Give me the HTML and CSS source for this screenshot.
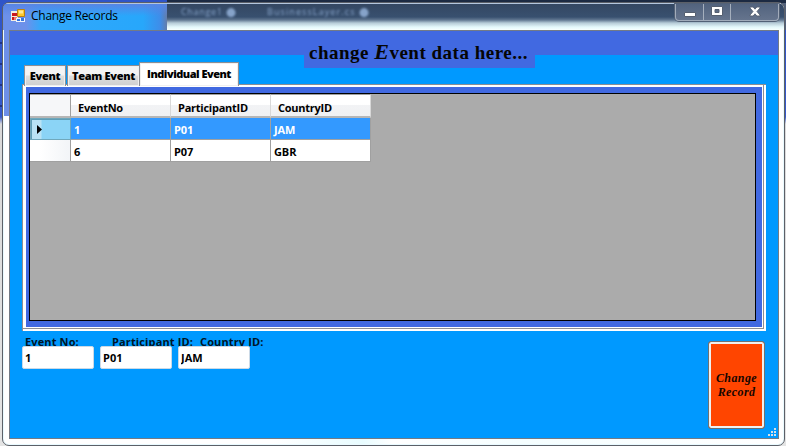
FILE: index.html
```html
<!DOCTYPE html>
<html lang="en">
<head>
<meta charset="utf-8">
<title>Change Records</title>
<link rel="stylesheet" href="styles.css">
</head>
<body>
<div class="desktop">
<div class="edge-text"></div>
<main class="window">
  <header class="titlebar">
    <div class="glass-blue"></div>
    <span class="ghost ghost-a">Change1 ⬤</span>
    <span class="ghost ghost-b">BusinessLayer.cs ⬤</span>
    <svg class="app-icon" width="15" height="14" viewBox="0 0 15 14">
      <path d="M0 2h7v10H0z" fill="#f4ede1"/><path d="M1 4h5v3H1zM1 8h2v3H1z" fill="#c9171e"/><path d="M3 8h3v3H3z" fill="#ed7c72"/>
      <path d="M6.500.5h7v7h-7z" fill="#ffc72b" stroke="#b98110"/><path d="M8 1.500h4v3H8z" fill="#ffe897"/>
      <path d="M5 9h9v4H5z" fill="#eef3fc"/><path d="M6 10h3v2H6zM10 9h3v3h-3z" fill="#3676df"/>
    </svg>
    <h1>Change Records</h1>
    <div class="controls">
      <button aria-label="Minimize"><svg width="12" height="5"><path d="M.5.5h11v4H.5z" fill="#fff" stroke="#555f70"/></svg></button>
      <button aria-label="Maximize"><svg width="12" height="10"><path d="M.5.5h11v9H.5zM4 3.500v3h4v-3z" fill="#fff" fill-rule="evenodd" stroke="#555f70"/></svg></button>
      <button aria-label="Close"><svg width="12" height="11" viewBox="0 0 12 11"><path d="M1 1h3.200L6 3.200 7.800 1H11v1L8 5.500 11 9v1H7.800L6 7.800 4.200 10H1V9l3-3.500L1 2z" fill="#fff" stroke="#555f70" stroke-width=".9"/></svg></button>
    </div>
  </header>
  <section class="client">
    <div class="banner"><h2>change <i>E</i>vent data here...</h2></div>
    <nav class="tabs">
      <span class="tab event"><b>Event</b></span><span class="tab team"><b>Team Event</b></span><span class="tab active"><b>Individual Event</b></span>
    </nav>
    <div class="panel"><div class="page"><div class="gridview">
      <table>
        <thead><tr><th class="rowhead"></th><th>EventNo</th><th>ParticipantID</th><th>CountryID</th></tr></thead>
        <tbody>
          <tr class="selected"><td class="rowhead"><svg width="5" height="9"><path d="M0 0l5 4.500L0 9z"/></svg></td><td>1</td><td>P01</td><td>JAM</td></tr>
          <tr><td class="rowhead"></td><td>6</td><td>P07</td><td>GBR</td></tr>
        </tbody>
      </table>
    </div></div></div>
    <div class="bottom">
      <div class="fields">
        <div class="labels"><span class="l1">Event No:</span><span class="l2">Participant ID:</span><span class="l3">Country ID:</span></div>
        <div class="inputs"><input value="1" aria-label="Event No"><input value="P01" aria-label="Participant ID"><input value="JAM" aria-label="Country ID"></div>
      </div>
      <button class="change"><span>Change</span><span>Record</span></button>
    </div>
    <svg class="grip" width="8" height="8"><path d="M6 0h2v2H6zM3 3h2v2H3zM6 3h2v2H6zM0 6h2v2H0zM3 6h2v2H3zM6 6h2v2H6z" fill="#d8dfe5"/></svg>
  </section>
</main>
</div>
</body>
</html>
```

FILE: styles.css
```css
* { box-sizing: border-box; }
body { margin: 0; overflow: hidden; font-family: "Comic Sans MS", "Open Sans", sans-serif; font-size: 11px; font-weight: 700; color: #000; }
h1, h2 { margin: 0; }
button { border: 0; padding: 0; background: none; }
.desktop { width: 786px; height: 446px; padding: 2px 1px 0 2px; position: relative; background: linear-gradient(90deg, transparent 167px, #1c2a42 167px) 0 0/100% 3px no-repeat, linear-gradient(90deg, transparent 780px, #52617a 780px) 0 0/100% 30px no-repeat, linear-gradient(#2f55c8 0, #3459cb 117px, #d9d9d9 124px, #e4e4e4 100%); }
.edge-text { position: absolute; left: 0; top: 42px; width: 2px; height: 70px; background: repeating-linear-gradient(#17256b 0 2px, transparent 2px 21px); opacity: .7; }
.window { position: relative; width: 783px; height: 444px; padding: 0 6px 7px; border: 1px solid #5c6068; border-radius: 7px; overflow: hidden; background: linear-gradient(90deg, #6d8fe8 0 9px, transparent 9px) 0 0/100% 113px no-repeat, linear-gradient(90deg, #fff 0 270px, #e8fcff 360px, #fff 390px, #f5feff 520px, #fff 100%); box-shadow: inset 0 0 0 1px #e9faff; }
.titlebar { height: 27px; margin: 0 -6px; padding: 0 5px 0 8px; display: flex; position: relative; background: linear-gradient(#344762 0, #38506f 13px, #627892 16px, #b6cbd7 19px, #e4f8fb 23px, #f7ffff 26px); border-top: 1px solid #b4c6dd; }
.glass-blue { position: absolute; left: 0; top: 0; width: 164px; height: 26px; background: linear-gradient(180deg, #5785e5 0, transparent 12px), linear-gradient(90deg, #6d91ea 0 23px, #32a8fb 38px, #27a7fb 140px, #3e8de9 157px, #647da9); }
.ghost { position: absolute; top: 2px; color: #9bb9e2; font: 9px/12px "Open Sans", sans-serif; filter: blur(1.200px); white-space: nowrap; opacity: .8; }
.ghost-a { left: 178px; letter-spacing: .7px; }
.ghost-b { left: 264px; letter-spacing: 1.1px; }
.app-icon { position: relative; margin-top: 5px; }
h1 { position: relative; margin: 3px 0 0 5px; font: 12px/17px "Open Sans", sans-serif; letter-spacing: -.26px; }
.controls { position: relative; display: flex; margin-left: auto; width: 104px; height: 17px; border: 1px solid #a2acbb; border-top: 0; border-radius: 0 0 4px 4px; box-shadow: 0 0 0 1px #536176; background: linear-gradient(#52637e, #65748d); }
.controls button { display: grid; place-items: center; width: 27px; border-right: 1px solid #a5afbd; }
.controls button:first-child { width: 28px; padding-top: 4px; }
.controls button:last-child { flex: 1; border: 0; padding-bottom: 2px; }
.controls button:nth-child(2) { padding-bottom: 3px; }
.client { position: relative; width: 770px; height: 409px; border: 1px solid #737b86; background: #09f; }
.banner { height: 24px; background: #4169e1; }
h2 { position: relative; width: 231px; height: 37px; margin-left: 294px; padding: 12px 0 0 5px; font: 700 19px/18px "Lucida Calligraphy", "Liberation Serif", serif; letter-spacing: .5px; color: #050505; background: #4169e1; white-space: nowrap; }
h2 i { font-size: 22px; }
.tabs { position: relative; height: 24px; margin: 7px 0 0 14px; display: flex; align-items: flex-end; z-index: 1; }
.tab { height: 21px; border: 1px solid #8c8e94; border-bottom: 0; background: linear-gradient(#f4f4f4 0 45%, #dedede 50%, #cfcfcf); line-height: 20px; text-align: center; white-space: nowrap; box-shadow: inset 0 0 0 1px #f0f0f0; }
.event { width: 42px; }
.team { width: 73px; margin-left: 1px; }
.tab.active { width: 100px; height: 24px; margin-left: -1px; line-height: 21px; background: #fff; }
.tab b { letter-spacing: -.3px; }
.tab.active b { letter-spacing: -.5px; }
.panel { width: 744px; height: 247px; margin: -2px 0 0 12px; padding: 2px 4px 4px 3px; border: 1px solid #8c8e94; border-right: 0; border-bottom: 0; background: linear-gradient(#8c8e94, #8c8e94) 740px 0/1px 244px no-repeat, linear-gradient(#8c8e94, #8c8e94) 0 243px/741px 1px no-repeat, #fff; }
.page { width: 736px; height: 240px; padding: 6px 6px 6px 3px; background: #4169e1; }
.gridview { width: 727px; height: 228px; border: 1px solid #000; background: #ababab; }
table { width: 341px; table-layout: fixed; border-collapse: separate; border-spacing: 0; background: #fff; letter-spacing: -.1px; }
th, td { padding: 2px 0 0 3px; text-align: left; border-right: 1px solid #a0a0a0; border-bottom: 1px solid #a0a0a0; height: 22px; line-height: 19px; }
tr { height: 22px; }
th { height: 24px; padding: 3px 0 0 7px; border-right-color: #d8d8d8; border-top: 1px solid #a0a0a0; border-bottom: 2px solid #b6b6b6; background: linear-gradient(#fff 0 45%, #f2f3f5 50%, #f0f1f3); line-height: 17px; letter-spacing: -.25px; }
th.rowhead { width: 41px; border-right-color: #a0a0a0; background: #f6f7f9; }
td.rowhead { padding-left: 7px; background: linear-gradient(90deg, #fff 10px, #f3f5f8 38px); }
.selected td { color: #fff; background: #39f; }
.selected td.rowhead { padding: 0 0 0 6px; color: #000; background: linear-gradient(90deg, #b9e3f5 10px, #8bd4f6 11px); border: 1px solid #70a8bc; box-shadow: inset 1px 1px #5f9eb7; }
td svg { display: block; }
.bottom { display: flex; justify-content: space-between; padding: 4px 13px 0 12px; }
.labels { display: flex; height: 11px; line-height: 14px; color: #001525; }
.labels span { white-space: nowrap; letter-spacing: .13px; }
.l1 { width: 87px; margin-left: 3px; }
.l2 { width: 88px; }
.inputs { position: relative; display: flex; gap: 6px; }
input { width: 72px; height: 23px; padding: 0 0 0 2px; border: 1px solid #cbd9e6; border-radius: 2px; background: #fff; font: inherit; color: #000; }
.change { display: flex; flex-direction: column; align-items: center; justify-content: center; width: 57px; height: 88px; margin-top: 6px; border: 1px solid #707070; border-radius: 3px; background: #ff4500; box-shadow: inset 0 0 0 2px #eef0f1; font: italic 700 12px/14px "Lucida Handwriting", "Liberation Serif", serif; letter-spacing: .4px; color: #160500; }
.grip { position: absolute; right: 2px; bottom: 2px; }
```
